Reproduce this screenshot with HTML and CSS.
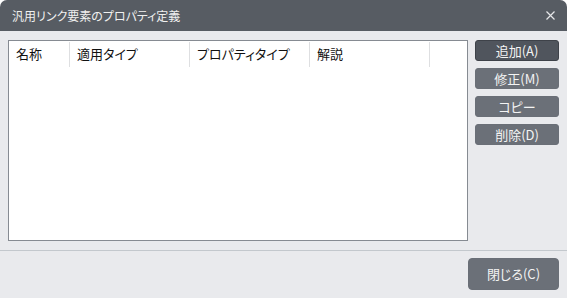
FILE: index.html
```html
<!DOCTYPE html>
<html lang="ja">
<head>
    <meta charset="UTF-8">
    <title>汎用リンク要素のプロパティ定義</title>
    <link rel="stylesheet" href="styles.css">
</head>
<body>
    <div class="window">
        <header class="titlebar">
            <span class="title">汎用リンク要素のプロパティ定義</span>
            <svg class="close" width="9" height="9" viewBox="0 0 9 9">
                <path d="M0.5 0.5 L8.5 8.5 M8.5 0.5 L0.5 8.5" stroke="#e6e7e9" stroke-width="1.2" fill="none"/>
            </svg>
        </header>

        <div class="content">
            <div class="listbox">
                <div class="list-header">
                    <div class="col col-name">名称</div>
                    <div class="col col-wide">適用タイプ</div>
                    <div class="col col-wide">プロパティタイプ</div>
                    <div class="col col-wide">解説</div>
                </div>
            </div>
            <div class="side-buttons">
                <button class="btn btn-primary">追加(A)</button>
                <button class="btn">修正(M)</button>
                <button class="btn">コピー</button>
                <button class="btn">削除(D)</button>
            </div>
        </div>

        <footer class="footer">
            <button class="btn btn-close">閉じる(C)</button>
        </footer>
    </div>
</body>
</html>
```

FILE: styles.css
```css
body {
    margin: 0;
    padding: 0;
    background-color: #ffffff;
    font-family: "Noto Sans CJK JP", "Noto Sans", sans-serif;
    font-feature-settings: "palt";
}
.window {
    width: 567px;
    height: 298px;
    background-color: #e9eaed;
    border-radius: 7px 7px 0 0;
    overflow: hidden;
    display: flex;
    flex-direction: column;
}
.titlebar {
    height: 31px;
    background-color: #575c63;
    color: #f0f0f0;
    display: flex;
    align-items: center;
    justify-content: space-between;
    padding: 0 12px 0 12px;
    box-sizing: border-box;
}
.title {
    font-size: 12px;
}
.close {
    display: block;
}
.content {
    display: flex;
    padding: 9px 8px 0 8px;
    gap: 7px;
}
.listbox {
    width: 460px;
    height: 201px;
    box-sizing: border-box;
    background-color: #ffffff;
    border: 1px solid #868b92;
}
.list-header {
    display: flex;
    height: 25px;
    padding-top: 1px;
}
.col {
    box-sizing: border-box;
    border-right: 1px solid #dedfe1;
    font-size: 13px;
    line-height: 24px;
    padding-left: 7px;
    color: #111111;
}
.col-name {
    width: 61px;
}
.col-wide {
    width: 120px;
}
.side-buttons {
    display: flex;
    flex-direction: column;
    gap: 7px;
}
.btn {
    font-family: "Noto Sans CJK JP", "Noto Sans", sans-serif;
    font-feature-settings: "palt";
    width: 84px;
    height: 21px;
    padding: 0;
    border: 1px solid #6a6f77;
    border-radius: 3px;
    background-color: #6b7078;
    color: #f4f4f4;
    font-size: 13px;
    line-height: 19px;
}
.btn-primary {
    background-color: #50555d;
    border-color: #3e4249;
}
.footer {
    margin-top: 9px;
    border-top: 1px solid #c3c8cd;
    display: flex;
    justify-content: flex-end;
    padding: 7px 8px 0 0;
}
.btn-close {
    width: 91px;
    height: 32px;
    border-radius: 4px;
    line-height: 30px;
}
```
